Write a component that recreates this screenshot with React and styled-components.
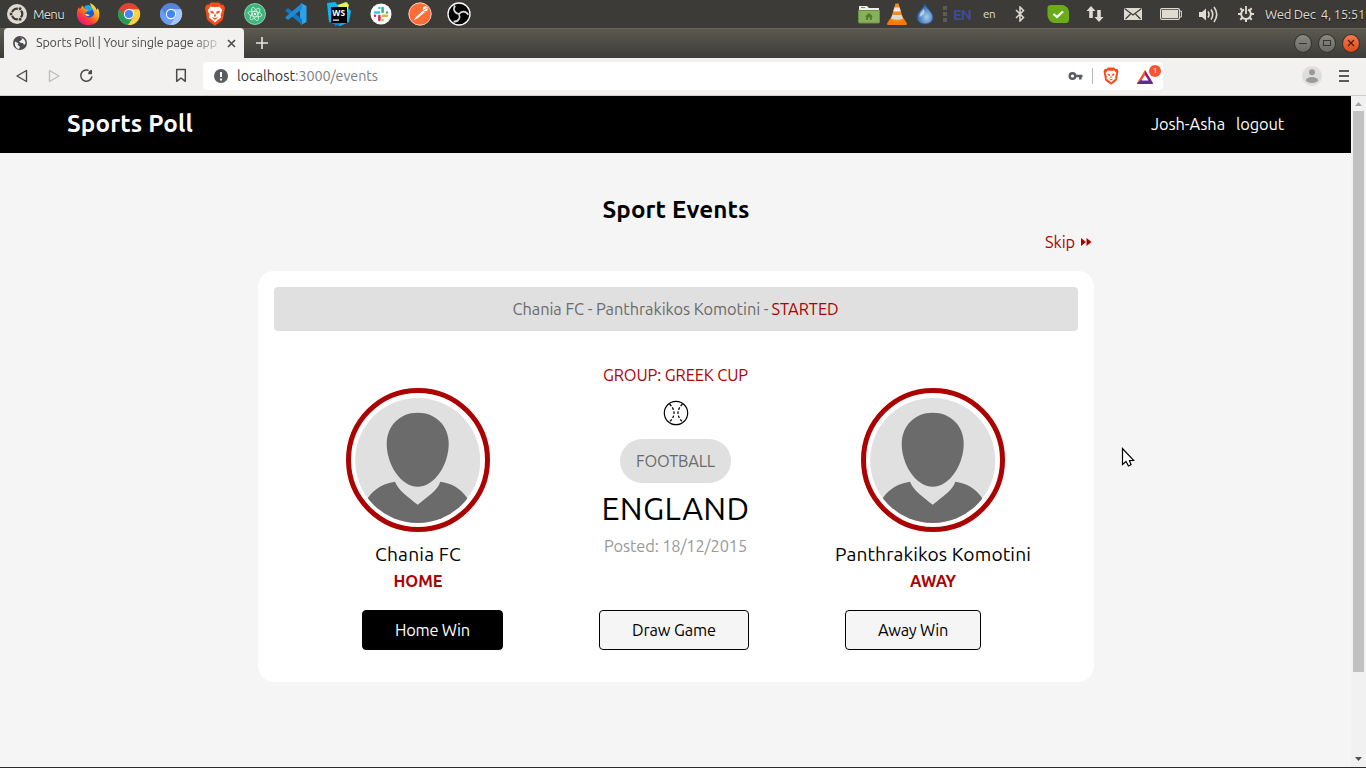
import React, { useLayoutEffect, useRef } from 'react';
import styled, { createGlobalStyle } from 'styled-components';

const GlobalStyle = createGlobalStyle`
  * { box-sizing: border-box; }
  html, body { margin: 0; padding: 0; overflow: hidden; }
  body { font-family: Ubuntu, "Noto Sans", "Open Sans", sans-serif; color: #000; }
`;

const red = '#ab0202';

/* ---------- text ---------- */
const Span = styled.span`
  display: block;
  flex: none;
  width: ${p => p.$w}px;
  white-space: nowrap;
  font-size: ${p => p.$size}px;
  font-weight: ${p => p.$weight || 400};
  color: ${p => p.$color || 'inherit'};
  line-height: ${p => p.$lh || 1.4};
  margin-left: ${p => p.$ml || 0}px;
  text-shadow: ${p => p.$shadow || 'none'};
`;

/* A single line whose tracking is adjusted to fill the given width. */
function Label({ w, size, weight, color, ml, shadow, lh, as, children }) {
  const ref = useRef(null);
  useLayoutEffect(() => {
    const el = ref.current;
    el.style.letterSpacing = '0px';
    const range = document.createRange();
    range.selectNodeContents(el);
    const natural = range.getBoundingClientRect().width;
    const count = el.textContent.length;
    el.style.letterSpacing = `${(w - natural) / Math.max(1, count)}px`;
  }, [w, children]);
  return (
    <Span ref={ref} as={as} $w={w} $size={size} $weight={weight} $color={color} $ml={ml} $shadow={shadow} $lh={lh}>
      {children}
    </Span>
  );
}

/* ---------- desktop panel ---------- */
const Desktop = styled.div`
  width: 1366px;
  height: 768px;
  display: flex;
  flex-direction: column;
  overflow: hidden;
  background: #f5f5f5;
`;
const Panel = styled.div`
  height: 28px;
  flex: none;
  display: flex;
  align-items: center;
  background: #3c3b37;
  color: #dfdbd2;
`;
const Launchers = styled.div`
  display: flex;
  align-items: center;
  flex: 1;
  padding-left: 7px;
`;
const Tray = styled.div`
  display: flex;
  align-items: center;
  padding-right: 1px;
`;
const Icon = styled.svg`
  display: block;
  flex: none;
  margin-left: ${p => p.$ml || 0}px;
`;

const Svg = ({ w = 24, h = w, ml, box, children }) => (
  <Icon width={w} height={h} viewBox={box || `0 0 ${w} ${h}`} $ml={ml} fill="none">{children}</Icon>
);

const MenuLogo = () => (
  <Svg w={20}>
    <circle cx="10" cy="10" r="10" fill="#dfdbd2" />
    <circle cx="10" cy="10" r="5.300" stroke="#3c3b37" strokeWidth="2.200" />
    <g fill="#3c3b37" stroke="#dfdbd2" strokeWidth="0.900">
      <circle cx="4" cy="10" r="1.900" />
      <circle cx="13.100" cy="4.700" r="1.900" />
      <circle cx="13.100" cy="15.300" r="1.900" />
    </g>
  </Svg>
);
const Firefox = () => (
  <Svg ml={12}>
    <defs>
      <linearGradient id="ff" x1="20" y1="2" x2="5" y2="22" gradientUnits="userSpaceOnUse">
        <stop offset="0" stopColor="#fff14b" /><stop offset=".4" stopColor="#ff9a15" />
        <stop offset=".7" stopColor="#ff3b3b" /><stop offset="1" stopColor="#e31587" />
      </linearGradient>
    </defs>
    <circle cx="12.5" cy="12" r="8" fill="#165bd8" />
    <path d="M8 5C10 2 16 2 18 7L12 10Z" fill="#1aa9e8" />
    <path d="M14 1C18 3 20 5 20.5 8C22 7 21.500 5.500 21 5C24 9 24 14 22 18C19 24 9 25 4 20C0 16 0 9 3 5C3 7 4 7 4.500 6.500C5 5 6 4 7 3.500C7 6 9 7 12 8C12 10 9 10 9 12C10 17 17 16 18 12C18 8 15 5 14 1Z" fill="url(#ff)" />
    <path d="M9 12C10 15 13 14 14 13C12 13 11 11 9 12Z" fill="#fff14b" />
  </Svg>
);
const ChromeIcon = ({ ml, colors }) => (
  <Svg ml={ml}>
    <circle cx="12" cy="12" r="11" fill={colors[0]} />
    <path d="M2.500 6.500A11 11 0 0 0 11 23L16.500 14.500L7.300 14.500Z" fill={colors[1]} />
    <path d="M22 7.200A11 11 0 0 1 11 23L16.800 14.500L14 7.200Z" fill={colors[2]} />
    <circle cx="12" cy="12" r="5.200" fill="#fff" />
    <circle cx="12" cy="12" r="4.100" fill="#4285f4" />
  </Svg>
);
const BraveIcon = ({ ml, size = 24 }) => (
  <Svg w={size} ml={ml} box="0 0 24 24">
    <path d="M8 0.500H16L18 2.500L20.500 2.700L22 6L21.500 8L20 17C19.500 19 14 22 12 23.800C10 22 4.500 19 4 17L2.500 8L2 6L3.500 2.700L6 2.500Z" fill="#fb4b17" />
    <path d="M7.500 4.500L10 5H14L16.500 4.500L19.200 8L17.500 13L18 15.500L14 18.500L12 20.500L10 18.500L6 15.500L6.500 13L4.800 8Z" fill="#fff" />
    <path d="M7 8.500L10.500 9.500L10.800 12L8 11ZM17 8.500L13.500 9.500L13.200 12L16 11ZM12 11L13 14L12 15L11 14ZM8.500 15L12 16.200L15.500 15L12 18Z" fill="#fb4b17" />
  </Svg>
);
const AtomIcon = () => (
  <Svg ml={16}>
    <circle cx="12" cy="12" r="10.500" fill="#3fb57c" stroke="#a6e3c5" strokeWidth="0.8" />
    <g stroke="#d9f7e7" strokeWidth="0.8">
      <ellipse cx="12" cy="12" rx="7" ry="2.600" transform="rotate(10 12 12)" />
      <ellipse cx="12" cy="12" rx="7" ry="2.600" transform="rotate(70 12 12)" />
      <ellipse cx="12" cy="12" rx="7" ry="2.600" transform="rotate(130 12 12)" />
    </g>
    <circle cx="12" cy="12" r="1.200" fill="#fff" />
  </Svg>
);
const CodeIcon = () => (
  <Svg ml={17}>
    <path d="M17 1L22.500 4V20L17 23L16 17V7Z" fill="#2ba3ec" />
    <path d="M1.500 8L4 6L18 17V23L1.500 9Z" fill="#0f78be" />
    <path d="M1.500 16L4 18L18 7V1L1.500 15Z" fill="#2189cf" />
  </Svg>
);
const StormIcon = () => (
  <Svg ml={19}>
    <path d="M0 1L8 0L11 3L21 0L20 5L24 9L22 20L13 24L2 20Z" fill="#10b7ee" />
    <path d="M11 3L19 0L22 3L20 10L12 8Z" fill="#e4f34d" />
    <path d="M3 5L8 24L14 22Z" fill="#087cfa" />
    <rect x="4" y="5" width="16" height="16" fill="#000" />
    <text x="5.200" y="13.600" fontSize="8.300" fontWeight="700" fontFamily="Noto Sans" fill="#fff" textLength="13">WS</text>
    <rect x="6" y="17.500" width="6" height="1.200" fill="#fff" />
  </Svg>
);
const SlackIcon = () => (
  <Svg ml={18}>
    <circle cx="12" cy="12" r="10.500" fill="#fff" />
    <g strokeWidth="2.500" strokeLinecap="round">
      <path d="M6 10.500H10M10.400 6V6.100" stroke="#36c5f0" />
      <path d="M13.600 6V10M18 10.500V10.400" stroke="#2eb67d" />
      <path d="M14 13.700H18M13.600 18V17.900" stroke="#ecb22e" />
      <path d="M10.400 14V18M6 13.700V13.800" stroke="#e01e5a" />
    </g>
  </Svg>
);
const PostmanIcon = () => (
  <Svg ml={15}>
    <circle cx="12" cy="12" r="11.200" fill="#ff6c37" stroke="#ffd0bd" strokeWidth="1" />
    <path d="M5.500 18.500L8 15L15 8.500L17 10L10 16Z" fill="#fff" />
    <circle cx="17.300" cy="6.700" r="2.500" fill="#fff" />
    <path d="M15.500 8.200L19 5.800" stroke="#ff6c37" strokeWidth="0.8" />
  </Svg>
);
const ObsIcon = () => (
  <Svg ml={15}>
    <circle cx="12" cy="12" r="11" fill="#050505" stroke="#fff" strokeWidth="1.300" />
    <g stroke="#ddd" strokeWidth="1.700">
      <path d="M8 3.500C5.500 8 8 11.500 12 12" />
      <path d="M8 3.500C5.500 8 8 11.500 12 12" transform="rotate(120 12 12)" />
      <path d="M8 3.500C5.500 8 8 11.500 12 12" transform="rotate(240 12 12)" />
    </g>
  </Svg>
);
const FolderIcon = () => (
  <Svg w={22} h={20}>
    <path d="M1 2.500Q1 2 1.500 2H9L11 4H20.500Q21 4 21 4.500V8H1Z" fill="#eef0e6" />
    <path d="M3 3.500H7" stroke="#6a9a44" />
    <path d="M0.500 6.500H21.500V18Q21.500 19 20.500 19H1.500Q0.500 19 0.500 18Z" fill="#86b05c" stroke="#6b9147" />
    <path d="M11 9L15 12.500H13.800V16H12V13.500H10V16H8.200V12.500H7Z" fill="#4e7a2c" />
  </Svg>
);
const ConeIcon = () => (
  <Svg w={20} h={22} ml={7}>
    <path d="M3.500 15H16.500L20 20.500Q20 22 19 22H1Q0 22 0 20.500Z" fill="#f37a06" />
    <path d="M8.500 0.500H11.500L16.500 17Q10 20.500 3.500 17Z" fill="#f58b1c" />
    <path d="M7.500 4.500H12.500L13.800 8.500H6.200Z" fill="#eeeae4" />
    <path d="M5.300 12H14.700L16 15.500Q10 18 4 15.500Z" fill="#dcdad5" />
  </Svg>
);
const DropIcon = () => (
  <Svg w={18} h={22} ml={9}>
    <defs>
      <radialGradient id="drop" cx=".6" cy=".65" r=".6"><stop offset="0" stopColor="#a7cdf2" /><stop offset="1" stopColor="#2d62a1" /></radialGradient>
    </defs>
    <path d="M9 1C10 5 17 9 17 14C17 18.500 13.500 21 9 21C4.500 21 1 18.500 1 14C1 9 8 5 9 1Z" fill="url(#drop)" stroke="#28558d" />
    <path d="M8 6C5 9 3 11 3.500 14C6 13 10 11 8 6Z" fill="#d5e6f8" opacity=".7" />
  </Svg>
);
const GripIcon = () => (
  <Svg w={4} h={16} ml={9}><path d="M0 0H4V4H0ZM0 6H4V10H0ZM0 12H4V16H0Z" fill="#5c5b57" /></Svg>
);
const BluetoothIcon = () => (
  <Svg w={10} h={16} ml={20}>
    <path d="M1 4L8.500 11.500L5 15V1L8.500 4.500L1 12" stroke="#dfdbd2" strokeWidth="1.500" />
  </Svg>
);
const CheckIcon = () => (
  <Svg w={22} h={18} ml={22}>
    <path d="M4 0H16Q22 2 22 7V15Q22 18 19 18H7Q2 17 0.500 11V3Q0.500 0 4 0Z" fill="#69ab1b" />
    <path d="M6.500 9L10 12L16 6.500" stroke="#fff" strokeWidth="2.300" />
  </Svg>
);
const ArrowsIcon = () => (
  <Svg w={18} h={18} ml={17}>
    <path d="M5 1L9.500 6H6.800V13H3.200V6H0.500ZM13 17L8.500 12H11.200V5H14.800V12H17.500Z" fill="#dfdbd2" />
  </Svg>
);
const MailIcon = () => (
  <Svg w={18} h={12} ml={20}>
    <rect width="18" height="12" fill="#dfdbd2" />
    <path d="M0.500 0.500L9 7L17.500 0.500M1.500 11L6.500 6M16.500 11L11.500 6" stroke="#3c3b37" strokeWidth="1.200" />
  </Svg>
);
const BatteryIcon = () => (
  <Svg w={22} h={12} ml={18}>
    <rect x="0.600" y="0.600" width="18.800" height="10.800" rx="1.500" stroke="#dfdbd2" strokeWidth="1.200" />
    <rect x="2" y="2" width="16" height="8" fill="#dfdbd2" />
    <path d="M20 3H21.400V9H20" stroke="#dfdbd2" />
  </Svg>
);
const SpeakerIcon = () => (
  <Svg w={20} h={17} ml={17}>
    <path d="M0 6H3L7 2.500V14.500L3 11H0Z" fill="#dfdbd2" />
    <path d="M9 5.500Q11 8.500 9 11.500M12 3.500Q15.500 8.500 12 13.500M15 1Q20.500 8.500 15 16" stroke="#dfdbd2" strokeWidth="1.600" />
  </Svg>
);
const GearIcon = () => (
  <Svg w={16} ml={19}>
    <path d="M6 3.600A4.900 4.900 0 1 0 10 3.600" stroke="#dfdbd2" strokeWidth="2" />
    <path d="M8 0V8" stroke="#dfdbd2" strokeWidth="1.800" />
    <path d="M2.300 2.300L4.500 4.500M13.700 2.300L11.500 4.500M0 8H3M13 8H16M2.300 13.700L4.500 11.500M13.700 13.700L11.500 11.500M8 13V16" stroke="#dfdbd2" strokeWidth="2" />
  </Svg>
);

/* ---------- browser chrome ---------- */
const TabStrip = styled.div`
  height: 30px;
  flex: none;
  display: flex;
  align-items: center;
  padding: 0 6px 0 4px;
  background: linear-gradient(#5c5a50, #3d3c38);
  box-shadow: inset 0 1px #65635a;
`;
const Tab = styled.div`
  width: 240px;
  height: 30px;
  display: flex;
  align-items: center;
  padding-left: 9px;
  background: #f2f1f0;
  border-radius: 4px 4px 0 0;
`;
const TabTitle = styled.div`
  margin-left: 9px;
  width: 187px;
  color: #4a4a4a;
  overflow: hidden;
  -webkit-mask-image: linear-gradient(90deg, #000 155px, transparent 190px);
  mask-image: linear-gradient(90deg, #000 155px, transparent 190px);
`;
const WindowButtons = styled.div`
  display: flex;
  gap: 6px;
  margin-left: auto;
`;
const WindowButton = styled.div`
  width: 18px;
  height: 19px;
  border-radius: 50%;
  border: 1px solid #35342f;
  background: ${p => (p.$close ? 'linear-gradient(#f5794f, #df4a16)' : 'linear-gradient(#8a8981, #6b6a64)')};
  display: grid;
  place-items: center;
`;
const Toolbar = styled.div`
  height: 38px;
  flex: none;
  display: flex;
  align-items: center;
  padding: 0 17px 2px 15px;
  background: #f2f1f0;
  border-bottom: 1px solid #cfcecd;
`;
const Address = styled.div`
  width: 960px;
  height: 28px;
  margin-left: 16px;
  padding: 0 7px 0 11px;
  display: flex;
  align-items: center;
  background: #fff;
  border-radius: 4px;
`;
const Url = styled.div`
  display: flex;
  padding-top: 2px;
`;
const Spacer = styled.div`flex: 1;`;
const Divider = styled.div`
  width: 1px;
  height: 16px;
  margin-left: 9px;
  background: #b8b8b8;
`;
const Rewards = styled.div`
  position: relative;
  margin-left: 16px;
  width: 20px;
  height: 18px;
`;
const Badge = styled.div`
  position: absolute;
  top: -2px;
  left: 13px;
  width: 12px;
  height: 12px;
  border-radius: 50%;
  background: #fb542b;
  color: #fff;
  font-size: 8px;
  line-height: 12px;
  text-align: center;
`;

/* ---------- page ---------- */
const Viewport = styled.div`
  flex: 1;
  display: flex;
  min-height: 0;
  border-bottom: 1px solid #2a2a2a;
`;
const Page = styled.main`
  width: 1351px;
  background: #f5f5f5;
`;
const SiteHeader = styled.header`
  height: 57px;
  padding: 0 67px 2px;
  display: flex;
  align-items: center;
  background: #000;
  color: #fff;
`;
const Nav = styled.nav`
  display: flex;
  gap: 11px;
  padding-top: 2px;
`;
const Content = styled.section`
  width: 836px;
  margin: 0 0 0 258px;
  display: flex;
  flex-direction: column;
  align-items: center;
`;
const Heading = styled.div`
  height: 40px;
  margin-top: 37px;
  display: flex;
  align-items: center;
`;
const SkipRow = styled.div`
  width: 100%;
  height: 24px;
  padding-right: 2px;
  display: flex;
  align-items: center;
  justify-content: flex-end;
  color: ${red};
`;
const Card = styled.article`
  width: 836px;
  height: 411px;
  margin-top: 17px;
  padding: 16px 16px 32px;
  border-radius: 16px;
  background: #fff;
`;
const Banner = styled.div`
  height: 44px;
  padding-right: 1px;
  display: flex;
  align-items: center;
  justify-content: center;
  border-radius: 4px;
  background: #e0e0e0;
  color: #6b6b6b;
`;
const Match = styled.div`
  display: grid;
  grid-template-columns: 257px 258px 257px;
  height: 279px;
  padding: 30px 16px 0 15.5px;
`;
const Column = styled.div`
  display: flex;
  flex-direction: column;
  align-items: center;
  padding-top: ${p => p.$top || 0}px;
`;
const Line = styled.div`
  height: ${p => p.$h}px;
  margin-top: ${p => p.$mt || 0}px;
  display: flex;
  align-items: center;
`;
const Pill = styled.div`
  width: 111px;
  height: 44px;
  margin-top: 13px;
  display: flex;
  align-items: center;
  justify-content: center;
  border-radius: 22px;
  background: #e0e0e0;
  color: #6b6b6b;
`;
const Votes = styled.div`
  display: flex;
  gap: 96px;
  padding-left: 88px;
`;
const VoteButton = styled.button`
  width: ${p => p.$w}px;
  height: 40px;
  padding: 0;
  display: flex;
  align-items: center;
  justify-content: center;
  font-family: inherit;
  border: 1px solid #000;
  border-radius: 4px;
  background: ${p => (p.$primary ? '#000' : '#f5f5f5')};
  color: ${p => (p.$primary ? '#fff' : '#000')};
`;
const ScrollBar = styled.div`
  width: 15px;
  display: flex;
  flex-direction: column;
  align-items: center;
  background: #f1f1f1;
`;
const Thumb = styled.div`
  width: 11px;
  height: 561px;
  background: #c1c1c1;
`;
const ScrollArrow = styled.div`
  height: 15px;
  display: grid;
  place-items: center;
  margin-top: ${p => (p.$end ? 'auto' : 0)};
  margin-bottom: ${p => (p.$end ? 1 : 0)}px;
`;
const Pointer = styled.div`
  position: absolute;
  left: 1121px;
  top: 447px;
`;

const Avatar = () => (
  <Svg w={144}>
    <circle cx="72" cy="72" r="69.500" stroke={red} strokeWidth="5" />
    <clipPath id="disc"><circle cx="71.700" cy="72.500" r="62.500" /></clipPath>
    <g clipPath="url(#disc)">
      <rect width="144" height="144" fill="#e0e0e0" />
      <path d="M71.700 24.700C90 24.700 102.700 38 102.700 56C102.700 76 89 98.700 71.700 98.700C54.400 98.700 40.700 76 40.700 56C40.700 38 53.400 24.700 71.700 24.700Z" fill="#6b6b6b" />
      <path d="M22 109.700C29 100 39 95 49 93.700C52 102 62 109 71.700 116.700C81 109 92 102 94.300 93.700C105 95 114 100 121 109.700L121 144H22Z" fill="#6b6b6b" />
    </g>
  </Svg>
);

const Team = ({ name, nameWidth, side, sideWidth }) => (
  <Column $top={27}>
    <Avatar />
    <Line $h={30} $mt={7}><Label w={nameWidth} size={19.2}>{name}</Label></Line>
    <Line $h={24}><Label w={sideWidth} size={16.4} weight={700} color={red}>{side}</Label></Line>
  </Column>
);

export default function App() {
  return (
    <Desktop>
      <GlobalStyle />
      <Panel>
        <Launchers>
          <MenuLogo />
          <Label ml={6} w={31} size={13.2} shadow="0 1px 1px #111">Menu</Label>
          <Firefox />
          <ChromeIcon ml={17} colors={['#e24335', '#22a05a', '#fdd042']} />
          <ChromeIcon ml={18} colors={['#5585d6', '#699df0', '#a5c8fa']} />
          <BraveIcon ml={20} />
          <AtomIcon />
          <CodeIcon />
          <StormIcon />
          <SlackIcon />
          <PostmanIcon />
          <ObsIcon />
        </Launchers>
        <Tray>
          <FolderIcon />
          <ConeIcon />
          <DropIcon />
          <GripIcon />
          <Label ml={6} w={18} size={15} weight={700} color="#3f4b97">EN</Label>
          <Label ml={12} w={12} size={11.5}>en</Label>
          <BluetoothIcon />
          <CheckIcon />
          <ArrowsIcon />
          <MailIcon />
          <BatteryIcon />
          <SpeakerIcon />
          <GearIcon />
          <Label ml={11} w={100} size={13.2} shadow="0 1px 1px #111">{'Wed Dec \u00a04, 15:51'}</Label>
        </Tray>
      </Panel>

      <TabStrip>
        <Tab>
          <Svg w={14}>
            <circle cx="7" cy="7" r="7" fill="#4a4c50" />
            <path d="M2 5.500L5.500 7.500L4.500 9L7 10.500L6 13C3 12.500 1.300 9.500 2 5.500ZM7 1.500L9.500 2.500L8 4.500L6 5.500L8 7H10L11 9L12.500 7.500C12.500 4 10 1.500 7 1.500Z" fill="#f2f1f0" />
          </Svg>
          <TabTitle><Label w={181} size={12.6}>Sports Poll | Your single page app</Label></TabTitle>
          <Svg w={9} ml={4}><path d="M1 1L8 8M8 1L1 8" stroke="#4a4a4a" strokeWidth="1.600" /></Svg>
        </Tab>
        <Svg w={12} ml={12}><path d="M6 0V12M0 6H12" stroke="#e8e6e0" strokeWidth="1.600" /></Svg>
        <WindowButtons>
          <WindowButton><Svg w={8}><path d="M0 4.500H8" stroke="#35342f" /></Svg></WindowButton>
          <WindowButton><Svg w={8}><rect x="0.500" y="1.500" width="7" height="5" stroke="#35342f" /></Svg></WindowButton>
          <WindowButton $close><Svg w={8}><path d="M1 1L7 7M7 1L1 7" stroke="#4a1d0d" strokeWidth="1.300" /></Svg></WindowButton>
        </WindowButtons>
      </TabStrip>

      <Toolbar>
        <Svg w={14}><path d="M11.500 1.500V12.500L2 7Z" stroke="#4a4a4a" strokeWidth="1.400" strokeLinejoin="round" /></Svg>
        <Svg w={14} ml={19}><path d="M1.500 1.500V12.500L11 7Z" stroke="#bdbdbd" strokeWidth="1.400" strokeLinejoin="round" /></Svg>
        <Svg w={15} ml={17}>
          <path d="M9 2.200A5.600 5.600 0 1 0 12.800 9" stroke="#4a4a4a" strokeWidth="1.500" strokeLinecap="round" />
          <path d="M13 2V6.200H9.200C9 4 10.500 2 13 2Z" fill="#4a4a4a" />
        </Svg>
        <Svg w={12} h={15} ml={81}><path d="M1.700 1.500H10.300V13.300L6 10L1.700 13.300Z" stroke="#4a4a4a" strokeWidth="1.500" strokeLinejoin="round" /></Svg>
        <Address>
          <Svg w={14}>
            <circle cx="7" cy="7" r="7" fill="#5a5c60" />
            <path d="M7 3V8M7 9.500V11.500" stroke="#fff" strokeWidth="2" />
          </Svg>
          <Url>
            <Label ml={9} w={58} size={14.3} color="#333">localhost</Label>
            <Label w={83} size={14.3} color="#7b8086">:3000/events</Label>
          </Url>
          <Spacer />
          <Svg w={15} h={10}>
            <circle cx="4.500" cy="5" r="2.800" stroke="#5a5c60" strokeWidth="2.400" />
            <path d="M7 5H14.500M12.300 5V8.500" stroke="#5a5c60" strokeWidth="2.600" />
          </Svg>
          <Divider />
          <BraveIcon size={18} ml={9} />
          <Rewards>
            <Svg w={18}>
              <path d="M9 3L1 16H9Z" fill="#fb542b" /><path d="M9 3L17 16H9Z" fill="#8d1d74" />
              <path d="M0.500 17L5 13H13L17.500 17Z" fill="#5c2d91" /><path d="M9 8L5.500 13.500H12.500Z" fill="#fff" />
            </Svg>
            <Badge>1</Badge>
          </Rewards>
        </Address>
        <Spacer />
        <Svg w={20}>
          <circle cx="10" cy="10" r="10" fill="#dededd" />
          <circle cx="10" cy="6.200" r="3" fill="#9a9a9a" />
          <ellipse cx="10" cy="14" rx="6" ry="3" fill="#9a9a9a" />
        </Svg>
        <Svg w={10} h={12} ml={17}><path d="M0 1H10M0 6H10M0 11H10" stroke="#5a5a5a" strokeWidth="2" /></Svg>
      </Toolbar>

      <Viewport>
        <Page>
          <SiteHeader>
            <Label w={126} size={24.2} weight={700}>Sports Poll</Label>
            <Spacer />
            <Nav>
              <Label w={74} size={16.4}>Josh-Asha</Label>
              <Label w={48} size={16.4}>logout</Label>
            </Nav>
          </SiteHeader>
          <Content>
            <Heading><Label w={147} size={24.2} weight={700}>Sport Events</Label></Heading>
            <SkipRow>
              <Label w={30} size={16.4}>Skip</Label>
              <Svg w={12} h={10} ml={5}><path d="M1 1L6 5L1 9ZM6.500 1L11.500 5L6.500 9Z" fill={red} /></Svg>
            </SkipRow>
            <Card>
              <Banner>
                <Label w={256} size={16.4}>Chania FC - Panthrakikos Komotini -</Label>
                <Label ml={3} w={67} size={16.4} color={red}>STARTED</Label>
              </Banner>
              <Match>
                <Team name="Chania FC" nameWidth={86} side="HOME" sideWidth={49} />
                <Column>
                  <Line $h={28}><Label w={145} size={16.4} color={red}>GROUP: GREEK CUP</Label></Line>
                  <Line $h={26} $mt={11}>
                    <Svg w={26}>
                      <circle cx="13" cy="13" r="11.700" stroke="#000" strokeWidth="1.200" />
                      <path d="M6.500 4Q15.500 13 6.500 22M19.500 4Q10.500 13 19.500 22" stroke="#000" strokeWidth="1.300" strokeDasharray="2.600 1.700" />
                    </Svg>
                  </Line>
                  <Pill><Label w={79} size={16.4}>FOOTBALL</Label></Pill>
                  <Line $h={51}><Label w={148} size={32}>ENGLAND</Label></Line>
                  <Line $h={24}><Label w={143} size={16.4} color="#999">Posted: 18/12/2015</Label></Line>
                </Column>
                <Team name="Panthrakikos Komotini" nameWidth={196} side="AWAY" sideWidth={46} />
              </Match>
              <Votes>
                <VoteButton $primary $w={141}><Label w={75} size={16.4}>Home Win</Label></VoteButton>
                <VoteButton $w={150}><Label w={84} size={16.4}>Draw Game</Label></VoteButton>
                <VoteButton $w={136}><Label w={70} size={16.4}>Away Win</Label></VoteButton>
              </Votes>
            </Card>
          </Content>
        </Page>
        <ScrollBar>
          <ScrollArrow><Svg w={7} h={4}><path d="M0 4L3.500 0L7 4Z" fill="#a3a3a3" /></Svg></ScrollArrow>
          <Thumb />
          <ScrollArrow $end><Svg w={7} h={4}><path d="M0 0L3.500 4L7 0Z" fill="#505050" /></Svg></ScrollArrow>
        </ScrollBar>
      </Viewport>

      <Pointer>
        <Svg w={14} h={22}>
          <path d="M1.500 1.500V17.500L5 14.500L7.500 19L10 17.800L8.500 13.500H12.800Z" fill="#fff" stroke="#000" strokeWidth="1.200" />
        </Svg>
      </Pointer>
    </Desktop>
  );
}
